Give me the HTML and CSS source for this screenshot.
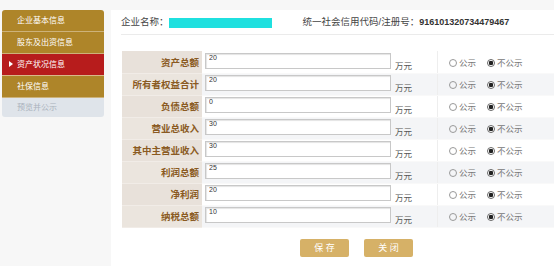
FILE: index.html
```html
<html>
<head>
	<meta charset="utf-8">
	<link rel="stylesheet" href="styles.css">
	<title>资产状况信息</title>
</head>
<body>
	<div id="menu">
		<div class="menuitem">企业基本信息</div>
		<div class="menuitem">股东及出资信息</div>
		<div class="menuitem active"><span class="arrow"></span>资产状况信息</div>
		<div class="menuitem">社保信息</div>
		<div class="menuitem disabled">预览并公示</div>
	</div>

	<div id="main">
		<div id="header">
			<span>企业名称：</span><span class="mask"></span>
			<span class="code">统一社会信用代码/注册号：<b>916101320734479467</b></span>
		</div>

		<table id="assets">
			<tr><td class="label">资产总额</td><td class="val"><input value="20"><span class="unit">万元</span></td><td class="pub"><span class="radio"></span>公示<span class="radio on"></span>不公示</td></tr>
			<tr><td class="label">所有者权益合计</td><td class="val"><input value="20"><span class="unit">万元</span></td><td class="pub"><span class="radio"></span>公示<span class="radio on"></span>不公示</td></tr>
			<tr><td class="label">负债总额</td><td class="val"><input value="0"><span class="unit">万元</span></td><td class="pub"><span class="radio"></span>公示<span class="radio on"></span>不公示</td></tr>
			<tr><td class="label">营业总收入</td><td class="val"><input value="30"><span class="unit">万元</span></td><td class="pub"><span class="radio"></span>公示<span class="radio on"></span>不公示</td></tr>
			<tr><td class="label">其中主营业收入</td><td class="val"><input value="30"><span class="unit">万元</span></td><td class="pub"><span class="radio"></span>公示<span class="radio on"></span>不公示</td></tr>
			<tr><td class="label">利润总额</td><td class="val"><input value="25"><span class="unit">万元</span></td><td class="pub"><span class="radio"></span>公示<span class="radio on"></span>不公示</td></tr>
			<tr><td class="label">净利润</td><td class="val"><input value="20"><span class="unit">万元</span></td><td class="pub"><span class="radio"></span>公示<span class="radio on"></span>不公示</td></tr>
			<tr><td class="label">纳税总额</td><td class="val"><input value="10"><span class="unit">万元</span></td><td class="pub"><span class="radio"></span>公示<span class="radio on"></span>不公示</td></tr>
		</table>

		<div id="buttons">
			<button class="btn">保 存</button>
			<button class="btn">关 闭</button>
		</div>
	</div>
</body>
</html>
```

FILE: styles.css
```css
html,body{
	margin: 0;
	background-color: #f7f7f7;
}
body,input,button{
	font-family: 'Liberation Sans', 'Noto Sans CJK SC', sans-serif;
}
body{
	display: flex;
	align-items: flex-start;
	height: 266px;
	overflow: hidden;
}
#menu{
	flex-shrink: 0;
	width: 102px;
	margin: 10px 0 0 2px;
	border-radius: 3px;
	overflow: hidden;
}
.menuitem{
	height: 22px;
	line-height: 21px;
	padding-left: 15px;
	font-size: 8px;
	color: #fff;
	background-color: #ae8529;
	border-bottom: 1px solid #cdb27a;
	box-sizing: border-box;
}
.menuitem.active{
	background-color: #b71c1c;
	border-bottom-color: #d9b98a;
	padding-left: 7px;
}
.arrow{
	display: inline-block;
	width: 0;
	height: 0;
	border-left: 4px solid #fff;
	border-top: 3px solid transparent;
	border-bottom: 3px solid transparent;
	margin-right: 4px;
}
.menuitem.disabled{
	background-color: #dfe4ea;
	color: #aab2bc;
	border-bottom: 0;
	height: 19px;
	line-height: 19px;
}
#main{
	flex: 1;
	min-width: 0;
	overflow: hidden;
	margin: 10px 0 0 7px;
	background-color: #fff;
	height: 256px;
	padding-left: 10px;
}
#header{
	height: 24px;
	line-height: 24px;
	border-bottom: 1px solid #ebebeb;
	font-size: 9.5px;
	color: #444;
	display: flex;
	align-items: center;
	white-space: nowrap;
}
.mask{
	display: inline-block;
	width: 103px;
	height: 10px;
	background-color: #1fe0df;
	margin-top: 2px;
}
.code{
	margin-left: 31px;
}
.code b{
	color: #333;
	font-size: 9px;
}
#assets{
	margin: 16px 0 0 1px;
	border-collapse: collapse;
	width: 100%;
}
#assets tr{
	height: 22px;
}
#assets tr:nth-child(even) td{
	background-color: #f4f5f7;
}
#assets td{
	padding: 0;
	height: 21px;
	border-bottom: 1px solid #f9f9f9;
}
#assets td.label{
	width: 80px;
	text-align: right;
	padding-right: 3px;
	box-sizing: border-box;
	font-size: 9.5px;
	font-weight: bold;
	color: #8a5a22;
	background-color: #e8e1da;
	border-bottom-color: #f1ece7;
}
#assets tr:nth-child(even) td.label{
	background-color: #ebe5de;
}
#assets td.val{
	width: 235px;
	white-space: nowrap;
}
#assets input{
	width: 186px;
	height: 16px;
	margin-left: 3px;
	border: 1px solid #c8c8c8;
	box-shadow: inset 1px 1px 1px #e4e4e4;
	font-size: 7px;
	padding: 0 3px 6px;
	color: #333;
	vertical-align: middle;
}
.unit{
	font-size: 8.5px;
	color: #555;
	margin-left: 4px;
	vertical-align: -4px;
}
#assets td.pub{
	border-left: 1px solid #eeeeee;
	padding-left: 11px;
	font-size: 8.5px;
	color: #777;
	white-space: nowrap;
}
.radio{
	display: inline-block;
	width: 6px;
	height: 6px;
	border: 1px solid #999;
	border-radius: 50%;
	margin-right: 2px;
	vertical-align: -1px;
	box-sizing: content-box;
}
.radio.on{
	margin-left: 11px;
	background: radial-gradient(circle, #222 0 2px, #fff 2.5px);
	border-color: #666;
}
#buttons{
	display: flex;
	gap: 15px;
	margin-top: 11px;
	padding-left: 179px;
}
.btn{
	width: 49px;
	height: 18px;
	border: 0;
	border-radius: 2px;
	background-color: #d6b167;
	color: #fff;
	font-size: 9px;
	padding: 0;
}
```
